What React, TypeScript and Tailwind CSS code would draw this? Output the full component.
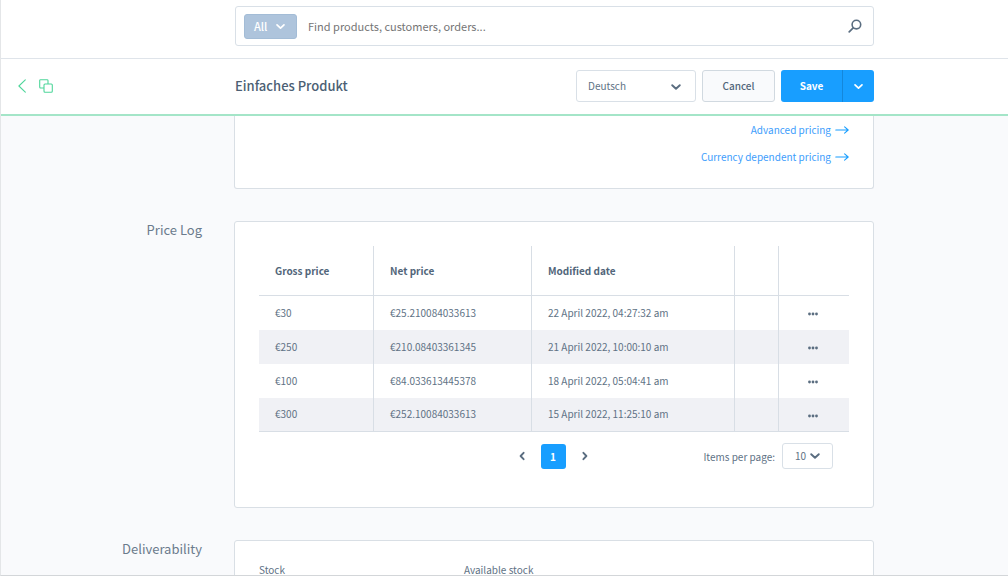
import React from "react";

type ChevronProps = { className?: string; direction?: "down" | "left" | "right" };

const chevronPaths = {
  down: "M2.2 4.2 6 7.8l3.8-3.6",
  left: "M7.6 2.8 4.6 6l3 3.2",
  right: "M4.4 2.8 7.4 6 4.4 9.2",
};

function Chevron({ className = "size-3", direction = "down" }: ChevronProps) {
  return (
    <svg
      viewBox="0 0 12 12"
      className={`shrink-0 ${className}`}
      fill="none"
      stroke="currentColor"
      strokeWidth="1.9"
      strokeLinecap="round"
      strokeLinejoin="round"
      aria-hidden="true"
    >
      <path d={chevronPaths[direction]} />
    </svg>
  );
}

function PricingLink({ children }: { children: string }) {
  return (
    <a href="#pricing" className="flex items-center gap-1 leading-4 text-[#3d9dfc]">
      {children}
      <svg viewBox="0 0 14 10" className="h-[10px] w-[14px]" fill="none" stroke="#189eff" strokeWidth="1.1" strokeLinecap="round" strokeLinejoin="round" aria-hidden="true">
        <path d="M.8 5h12.4M9.6 1.8 13.2 5 9.6 8.2" />
      </svg>
    </a>
  );
}

const rows = [
  { gross: "€30", net: "€25.210084033613", date: "22 April 2022, 04:27:32 am" },
  { gross: "€250", net: "€210.08403361345", date: "21 April 2022, 10:00:10 am" },
  { gross: "€100", net: "€84.033613445378", date: "18 April 2022, 05:04:41 am" },
  { gross: "€300", net: "€252.10084033613", date: "15 April 2022, 11:25:10 am" },
];

const columns = "grid grid-cols-[233px_minmax(0,1fr)_134px]";

function SectionTitle({ children }: { children?: string }) {
  return <h2 className="pr-8 text-right text-[13px] leading-[18px] text-[#6b7b8c]">{children}</h2>;
}

export default function App() {
  return (
    <div className="flex h-screen flex-col overflow-hidden border-b border-l border-b-[#d3d6d9] border-l-[#e4e6e8] bg-[#f9fafc] font-['Noto_Sans_CJK_SC','Noto_Sans',sans-serif] text-[10px] text-[#607285]">
      <header className={`${columns} shrink-0 border-b border-[#dfe4ea] bg-white pt-[6px] pb-3`}>
        <form role="search" className="col-start-2 ml-px flex h-10 items-center rounded-[3px] border border-[#d9e0e7] pr-[11px] pl-2" onSubmit={(e) => e.preventDefault()}>
          <button type="button" className="flex h-[25px] w-[53px] items-center justify-between rounded-[3px] border border-[#a3bcd6] bg-[#aec4dc] pr-[10px] pl-[9px] text-[11px] font-medium text-white">
            All
            <Chevron className="size-[11px]" />
          </button>
          <input
            type="search"
            aria-label="Search"
            placeholder="Find products, customers, orders..."
            className="ml-[11px] h-8 min-w-0 flex-1 bg-transparent text-[11px] outline-none placeholder:text-[#757575]"
          />
          <button type="submit" aria-label="Submit search">
            <svg viewBox="0 0 14 14" className="size-[14px] text-[#5a6d80]" fill="none" stroke="currentColor" strokeLinecap="round" aria-hidden="true">
              <circle cx="8.4" cy="5.6" r="4.3" strokeWidth="1.6" />
              <path d="M5.2 8.8 1.2 12.8" strokeWidth="1.7" />
            </svg>
          </button>
        </form>
      </header>

      <div className={`${columns} shrink-0 border-b-2 border-[#a4e5c8] bg-white pt-[11px] pb-3`}>
        <div className="flex items-center gap-[13px] pl-[17px] text-[#4fd69b]">
          <button type="button" aria-label="Back">
            <svg viewBox="0 0 8 14" className="h-[14px] w-2" fill="none" stroke="currentColor" strokeWidth="1.1" strokeLinecap="round" strokeLinejoin="round" aria-hidden="true">
              <path d="M7.3.8.9 7l6.4 6.2" />
            </svg>
          </button>
          <button type="button" aria-label="Duplicate">
            <svg viewBox="0 0 14 14" className="size-[14px]" fill="none" stroke="currentColor" strokeWidth="1.1" aria-hidden="true">
              <rect x="5" y="5" width="8.3" height="8.3" rx="1" />
              <path d="M5 9H1.6a.9.9 0 0 1-.9-.9V1.6c0-.5.4-.9.9-.9h6.5c.5 0 .9.4.9.9V5" />
            </svg>
          </button>
        </div>
        <div className="ml-px flex h-8 items-center">
          <h1 className="flex-1 text-[13px] font-medium text-[#4c5f74]">Einfaches Produkt</h1>
          <div className="relative h-8 w-[120px]">
            <select aria-label="Language" className="h-full w-full appearance-none rounded-[3px] border border-[#d9e0e7] bg-white px-[11px] pb-[2px]">
              <option>Deutsch</option>
            </select>
            <Chevron className="pointer-events-none absolute top-[11px] right-[14px] size-3 text-[#5a6d80]" />
          </div>
          <button type="button" className="ml-[6px] h-8 w-[73px] rounded-[3px] border border-[#d1d9e0] bg-[#f9fafc] pb-[2px] font-medium text-[#52667a]">
            Cancel
          </button>
          <div className="ml-[6px] flex h-8 overflow-hidden rounded-[3px] bg-[#189eff] text-white">
            <button type="button" className="w-[62px] border-r border-[#1487db] pb-[2px] font-bold">Save</button>
            <button type="button" aria-label="More save options" className="flex w-[31px] items-center justify-center">
              <Chevron className="size-[11px]" />
            </button>
          </div>
        </div>
      </div>

      <main className="flex min-h-0 flex-1 flex-col gap-8 overflow-hidden">
        <section className={`${columns} shrink-0`}>
          <div className="col-start-2 flex flex-col items-end gap-[11px] rounded-b-[3px] border border-t-0 border-[#d9dfe5] bg-white pt-[6px] pr-6 pb-[23px]">
            <PricingLink>Advanced pricing</PricingLink>
            <PricingLink>Currency dependent pricing</PricingLink>
          </div>
        </section>

        <section className={`${columns} shrink-0`}>
          <SectionTitle>Price Log</SectionTitle>
          <div className="rounded-[3px] border border-[#d9dfe5] bg-white px-6 pt-6 pb-[37px]">
            <table className="w-full table-fixed border-separate border-spacing-0 text-left">
              <colgroup>
                <col className="w-[115px]" />
                <col className="w-[158px]" />
                <col />
                <col className="w-11" />
                <col className="w-[70px]" />
              </colgroup>
              <thead>
                <tr className="h-[50px] text-[#52667a] *:border-r *:border-b *:border-[#d8dee5] *:px-4 *:font-bold *:last:border-r-0">
                  <th scope="col">Gross price</th>
                  <th scope="col">Net price</th>
                  <th scope="col">Modified date</th>
                  <td />
                  <td />
                </tr>
              </thead>
              <tbody>
                {rows.map((row) => (
                  <tr key={row.net} className="h-[34px] even:bg-[#f0f1f5] *:border-r *:border-[#d8dee5] *:px-4 *:last:border-r-0 last:*:border-b">
                    <td className="pb-[2px]">{row.gross}</td>
                    <td className="pb-[2px]">{row.net}</td>
                    <td className="pb-[2px]">{row.date}</td>
                    <td />
                    <td className="pt-[2px]">
                      <button type="button" aria-label="Row actions" className="mx-auto block">
                        <svg viewBox="0 0 12 4" className="h-1 w-3" fill="#5a6d80" aria-hidden="true">
                          <circle cx="1.5" cy="2" r="1.4" />
                          <circle cx="5" cy="2" r="1.4" />
                          <circle cx="8.5" cy="2" r="1.4" />
                        </svg>
                      </button>
                    </td>
                  </tr>
                ))}
              </tbody>
            </table>
            <div className="mt-[11px] grid grid-cols-[1fr_auto_1fr] items-center pr-4 pb-px">
              <span />
              <nav aria-label="Pagination" className="flex items-center gap-[13px] pl-[14px] text-[#5a6d80]">
                <button type="button" aria-label="Previous page"><Chevron direction="left" /></button>
                <button type="button" aria-current="page" className="size-[25px] rounded-[3px] bg-[#189eff] font-bold text-white">1</button>
                <button type="button" aria-label="Next page"><Chevron direction="right" /></button>
              </nav>
              <div className="flex items-center justify-end gap-[7px]">
                <label htmlFor="per-page">Items per page:</label>
                <div className="relative h-[26px] w-[51px]">
                  <select id="per-page" className="h-full w-full appearance-none rounded-[3px] border border-[#d9e0e7] bg-white pb-[2px] pl-3">
                    <option>10</option>
                  </select>
                  <Chevron className="pointer-events-none absolute top-[7px] right-3 size-3 text-[#5a6d80]" />
                </div>
              </div>
            </div>
          </div>
        </section>

        <section className={`${columns} shrink-0`}>
          <SectionTitle>Deliverability</SectionTitle>
          <div className="grid grid-cols-[205px_1fr] rounded-[3px] border border-[#d9dfe5] bg-white px-6 pt-[23px] pb-10 leading-3">
            <span>Stock</span>
            <span>Available stock</span>
          </div>
        </section>
      </main>
    </div>
  );
}
